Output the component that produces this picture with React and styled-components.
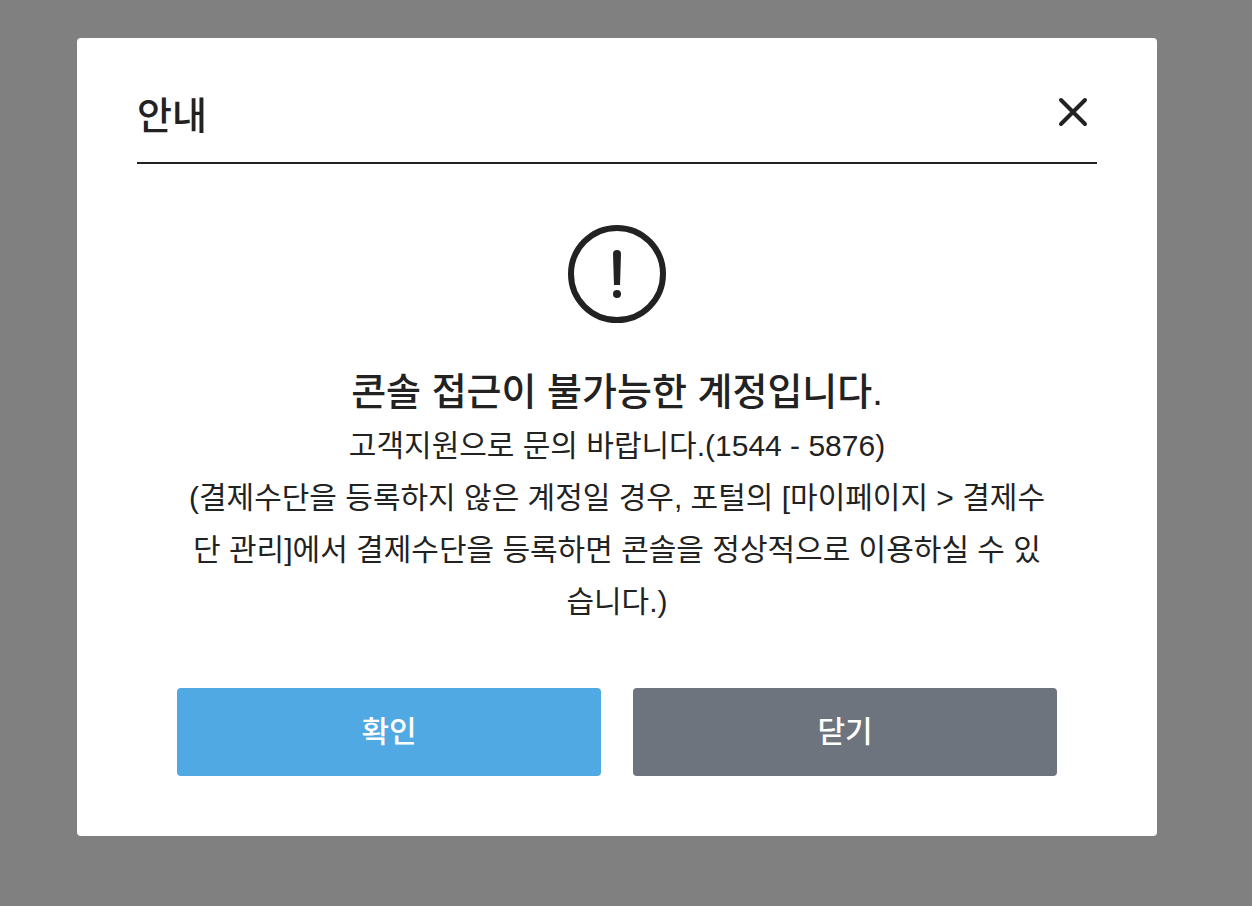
import styled, { createGlobalStyle } from "styled-components";

const GlobalStyle = createGlobalStyle`
    * {
        box-sizing: border-box;
    }

    body {
        margin: 0;
        background: #808080;
        color: #222222;
        font-family: "Liberation Sans", "Noto Sans CJK KR", sans-serif;
    }
`;

const Overlay = styled.main`
    min-height: 100vh;
    padding: 38px 95px 70px 77px;
`;

const Dialog = styled.section`
    width: 100%;
    max-width: 1080px;
    margin: 0 auto;
    padding: 48px 60px 60px;
    border-radius: 4px;
    background: #ffffff;
`;

const Header = styled.header`
    display: flex;
    justify-content: space-between;
    align-items: flex-start;
    height: 78px;
    border-bottom: 2px solid #222222;
`;

const Title = styled.h1`
    margin: 0;
    font-weight: 500;
    font-size: 38px;
    line-height: 60px;
`;

const CloseButton = styled.button`
    display: flex;
    justify-content: center;
    align-items: center;
    width: 48px;
    height: 52px;
    padding: 0;
    border: 0;
    background: transparent;
    color: #222222;
    cursor: pointer;
`;

const Body = styled.div`
    padding: 60px 40px 0;
    text-align: center;
`;

const AlertIcon = styled.svg`
    display: block;
    margin: 0 auto 40px;
`;

const Message = styled.h2`
    margin: 0;
    font-weight: 500;
    font-size: 38px;
    line-height: 56px;
`;

const Description = styled.p`
    margin: 0;
    padding: 0 8px;
    font-size: 30px;
    line-height: 52px;
`;

const Actions = styled.div`
    display: grid;
    grid-template-columns: 1fr 1fr;
    gap: 32px;
    margin-top: 60px;
`;

const ActionButton = styled.button`
    height: 88px;
    padding: 0;
    border: 0;
    border-radius: 4px;
    background: ${({ $primary }) => ($primary ? "#50a9e3" : "#6e747d")};
    color: #ffffff;
    font-family: inherit;
    font-weight: 500;
    font-size: 30px;
    line-height: 44px;
    cursor: pointer;
`;

export default function App() {
    return (
        <>
            <GlobalStyle />
            <Overlay>
                <Dialog role="dialog" aria-modal="true" aria-labelledby="dialog-title">
                    <Header>
                        <Title id="dialog-title">안내</Title>
                        <CloseButton type="button" aria-label="닫기">
                            <svg width="30" height="30" viewBox="0 0 30 30" fill="none" stroke="currentColor" strokeWidth="4" strokeLinecap="round">
                                <path d="M3 3l24 24M27 3L3 27" />
                            </svg>
                        </CloseButton>
                    </Header>
                    <Body>
                        <AlertIcon width="100" height="100" viewBox="0 0 100 100" aria-hidden="true">
                            <circle cx="50" cy="50" r="46" fill="none" stroke="#222222" strokeWidth="6" />
                            <path d="M46 30a4 4 0 0 1 8 0l-1 31h-6z" fill="#222222" />
                            <circle cx="50" cy="70" r="4" fill="#222222" />
                        </AlertIcon>
                        <Message>콘솔 접근이 불가능한 계정입니다.</Message>
                        <Description>
                            고객지원으로 문의 바랍니다.(1544 - 5876)
                            <br />
                            (결제수단을 등록하지 않은 계정일 경우, 포털의 [마이페이지 &gt; 결제수단 관리]에서 결제수단을 등록하면 콘솔을 정상적으로 이용하실 수 있습니다.)
                        </Description>
                        <Actions>
                            <ActionButton type="button" $primary>확인</ActionButton>
                            <ActionButton type="button">닫기</ActionButton>
                        </Actions>
                    </Body>
                </Dialog>
            </Overlay>
        </>
    );
}
